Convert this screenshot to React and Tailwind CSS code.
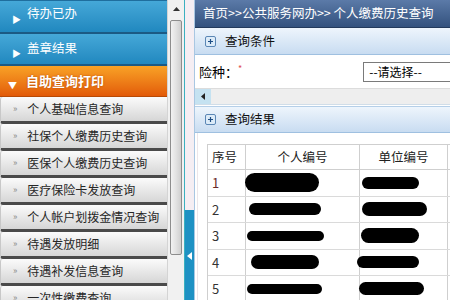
import React from "react"

const menuItems = [
  "个人基础信息查询",
  "社保个人缴费历史查询",
  "医保个人缴费历史查询",
  "医疗保险卡发放查询",
  "个人帐户划拨金情况查询",
  "待遇发放明细",
  "待遇补发信息查询",
  "一次性缴费查询",
]

const rows = [
  { n: "1", a: [-1, 74, 19], b: [2, 57, 12], color: "text-[#6b2a2a]" },
  { n: "2", a: [3, 72, 12], b: [2, 65, 14], color: "text-[#333]" },
  { n: "3", a: [1, 77, 10], b: [1, 58, 15], color: "text-[#333]" },
  { n: "4", a: [5, 68, 14], b: [-3, 62, 12], color: "text-[#333]" },
  { n: "5", a: [1, 75, 10], b: [-1, 65, 13], color: "text-[#333]" },
]

function PlusBox() {
  return (
    <svg width="11" height="11" viewBox="0 0 11 11">
      <rect x="0.5" y="0.5" width="10" height="10" rx="1.5" fill="#dcebf8" stroke="#5b87b5" />
      <path d="M3 5.5h5M5.5 3v5" stroke="#1f4f86" strokeWidth="1.2" />
    </svg>
  )
}

function Blob({ spec }) {
  const [ml, w, h] = spec
  return (
    <div
      className="bg-black rounded-full"
      style={{ marginLeft: ml, width: w, height: h }}
    />
  )
}

export default function App() {
  return (
    <div className="w-[450px] h-[300px] overflow-hidden flex bg-white font-['Noto_Sans_CJK_SC',sans-serif] text-[12px]">
      {/* sidebar */}
      <aside className="w-[167px] shrink-0 flex flex-col bg-[#e9e9e9]">
        <div className="h-[34px] shrink-0 flex items-center gap-[6px] pl-[12px] text-white bg-gradient-to-b from-[#45a8d8] to-[#2088bf] border-t border-[#1f6e9e] border-b-2 border-b-[#1b5a84]">
          <span className="text-[9px] mt-[7px]">▶</span>
          <span className="text-[12.5px] mb-[6px]">待办已办</span>
        </div>
        <div className="h-[32px] shrink-0 flex items-center gap-[6px] pl-[12px] text-white bg-gradient-to-b from-[#45a8d8] to-[#2088bf] border-b-2 border-b-[#1b5a84]">
          <span className="text-[9px] mt-[9px]">▶</span>
          <span className="text-[12.5px] mb-[1px]">盖章结果</span>
        </div>
        <div className="h-[31px] shrink-0 flex items-center gap-[9px] pl-[8px] text-white font-bold bg-gradient-to-b from-[#f8a226] to-[#e25a08] border-b border-[#b84a05]">
          <span className="text-[9px] mt-[10px]">▼</span>
          <span className="text-[13px] [text-shadow:0_0_2px_#b34a00]">自助查询打印</span>
        </div>
        {menuItems.map((t) => (
          <div
            key={t}
            className="h-[27px] shrink-0 flex items-center pl-[12px] gap-[10px] text-[#262626] bg-gradient-to-b from-[#fbfbfb] to-[#d6d6d6] border-l border-[#c8c8c8] border-b-[3px] border-b-[#4a4a4a] rounded-l-[3px]"
          >
            <span className="text-[9px] text-[#888]">»</span>
            <span className="text-[12px]">{t}</span>
          </div>
        ))}
      </aside>

      {/* vertical scrollbar */}
      <div className="w-[17px] shrink-0 flex flex-col bg-[#f1f1f1] border-l border-[#d4d4d4]">
        <div className="h-[18px] flex items-center justify-center">
          <svg width="7" height="4" viewBox="0 0 7 4">
            <path d="M0 4L3.5 0L7 4Z" fill="#333" />
          </svg>
        </div>
        <div className="mx-[2px] mt-[2px] h-[235px] rounded-[2px] border border-[#8d8d8d] bg-gradient-to-r from-[#f2f2f2] via-[#e2e2e2] to-[#cfcfcf]" />
      </div>

      {/* collapse strip */}
      <div className="w-[10px] shrink-0 flex flex-col border-l border-[#3ab0c0]">
        <div className="h-[210px] bg-[#f5eef3]" />
        <div className="flex-1 bg-[#1e91c3] flex flex-col items-center pt-[42px]">
          <svg width="5" height="8" viewBox="0 0 5 8">
            <path d="M5 0L0 4L5 8Z" fill="#ffffff" />
          </svg>
        </div>
      </div>

      {/* main */}
      <main className="flex-1 flex flex-col min-w-0 border-l border-[#a9c7e2]">
        <div className="h-[28px] shrink-0 flex items-center pl-[8px] text-white text-[12.5px] bg-gradient-to-b from-[#5b7aa8] to-[#34527e] border-b border-[#233a5c] whitespace-nowrap">
          首页&gt;&gt;公共服务网办&gt;&gt; 个人缴费历史查询
        </div>
        <div className="h-[27px] shrink-0 flex items-center gap-[9px] pl-[10px] bg-gradient-to-b from-[#eef5fc] to-[#c8dcf1] border-b border-[#9fc0e0]">
          <PlusBox />
          <span className="text-[12.5px] text-[#111]">查询条件</span>
        </div>
        <div className="h-[33px] shrink-0 flex items-center pl-[4px] bg-white whitespace-nowrap">
          <span className="text-[13px] text-black w-[45px]">险种：</span>
          <span className="text-[9px] text-[#e05050] mb-[6px]">*</span>
          <div className="ml-[121px] h-[20px] flex items-center pl-[5px] w-[120px] border border-[#7a7a7a] border-r-0 text-[12px] text-black">
            --请选择--
          </div>
        </div>
        <div className="h-[17px] shrink-0 flex bg-[#eeeeee] border-t border-[#dcdcdc] border-b border-b-[#d0dde8]">
          <div className="w-[16px] flex items-center justify-center bg-[#c5e2f1]">
            <svg width="4" height="7" viewBox="0 0 4 7">
              <path d="M4 0L0 3.5L4 7Z" fill="#222" />
            </svg>
          </div>
        </div>
        <div className="h-[27px] shrink-0 mt-[1px] flex items-center gap-[9px] pl-[10px] bg-gradient-to-b from-[#eef5fc] to-[#c8dcf1] border-t border-[#b5cfe8] border-b border-b-[#9fc0e0]">
          <PlusBox />
          <span className="text-[12.5px] text-[#111]">查询结果</span>
        </div>
        <div className="flex-1 pt-[11px] pl-[9px] ml-[2px] bg-white overflow-hidden border-l border-[#ece6ea]">
          <div className="w-[300px] border-t border-l border-[#cfcfcf]">
            <div className="h-[25px] flex border-b border-[#cfcfcf] text-[12.5px] text-[#222]">
              <div className="w-[38px] shrink-0 flex items-center pl-[4px] border-r border-[#cfcfcf]">序号</div>
              <div className="w-[114px] shrink-0 flex items-center justify-center border-r border-[#cfcfcf]">个人编号</div>
              <div className="w-[88px] shrink-0 flex items-center justify-center border-r border-[#cfcfcf]">单位编号</div>
              <div className="flex-1" />
            </div>
            {rows.map((r) => (
              <div key={r.n} className="h-[26.5px] flex border-b border-[#dadada]">
                <div className={`w-[38px] shrink-0 flex items-center pl-[4px] border-r border-[#cfcfcf] text-[13px] ${r.color}`}>
                  {r.n}
                </div>
                <div className="w-[114px] shrink-0 flex items-center border-r border-[#cfcfcf]">
                  <Blob spec={r.a} />
                </div>
                <div className="w-[88px] shrink-0 flex items-center border-r border-[#cfcfcf]">
                  <Blob spec={r.b} />
                </div>
                <div className="flex-1" />
              </div>
            ))}
          </div>
        </div>
      </main>
    </div>
  )
}
